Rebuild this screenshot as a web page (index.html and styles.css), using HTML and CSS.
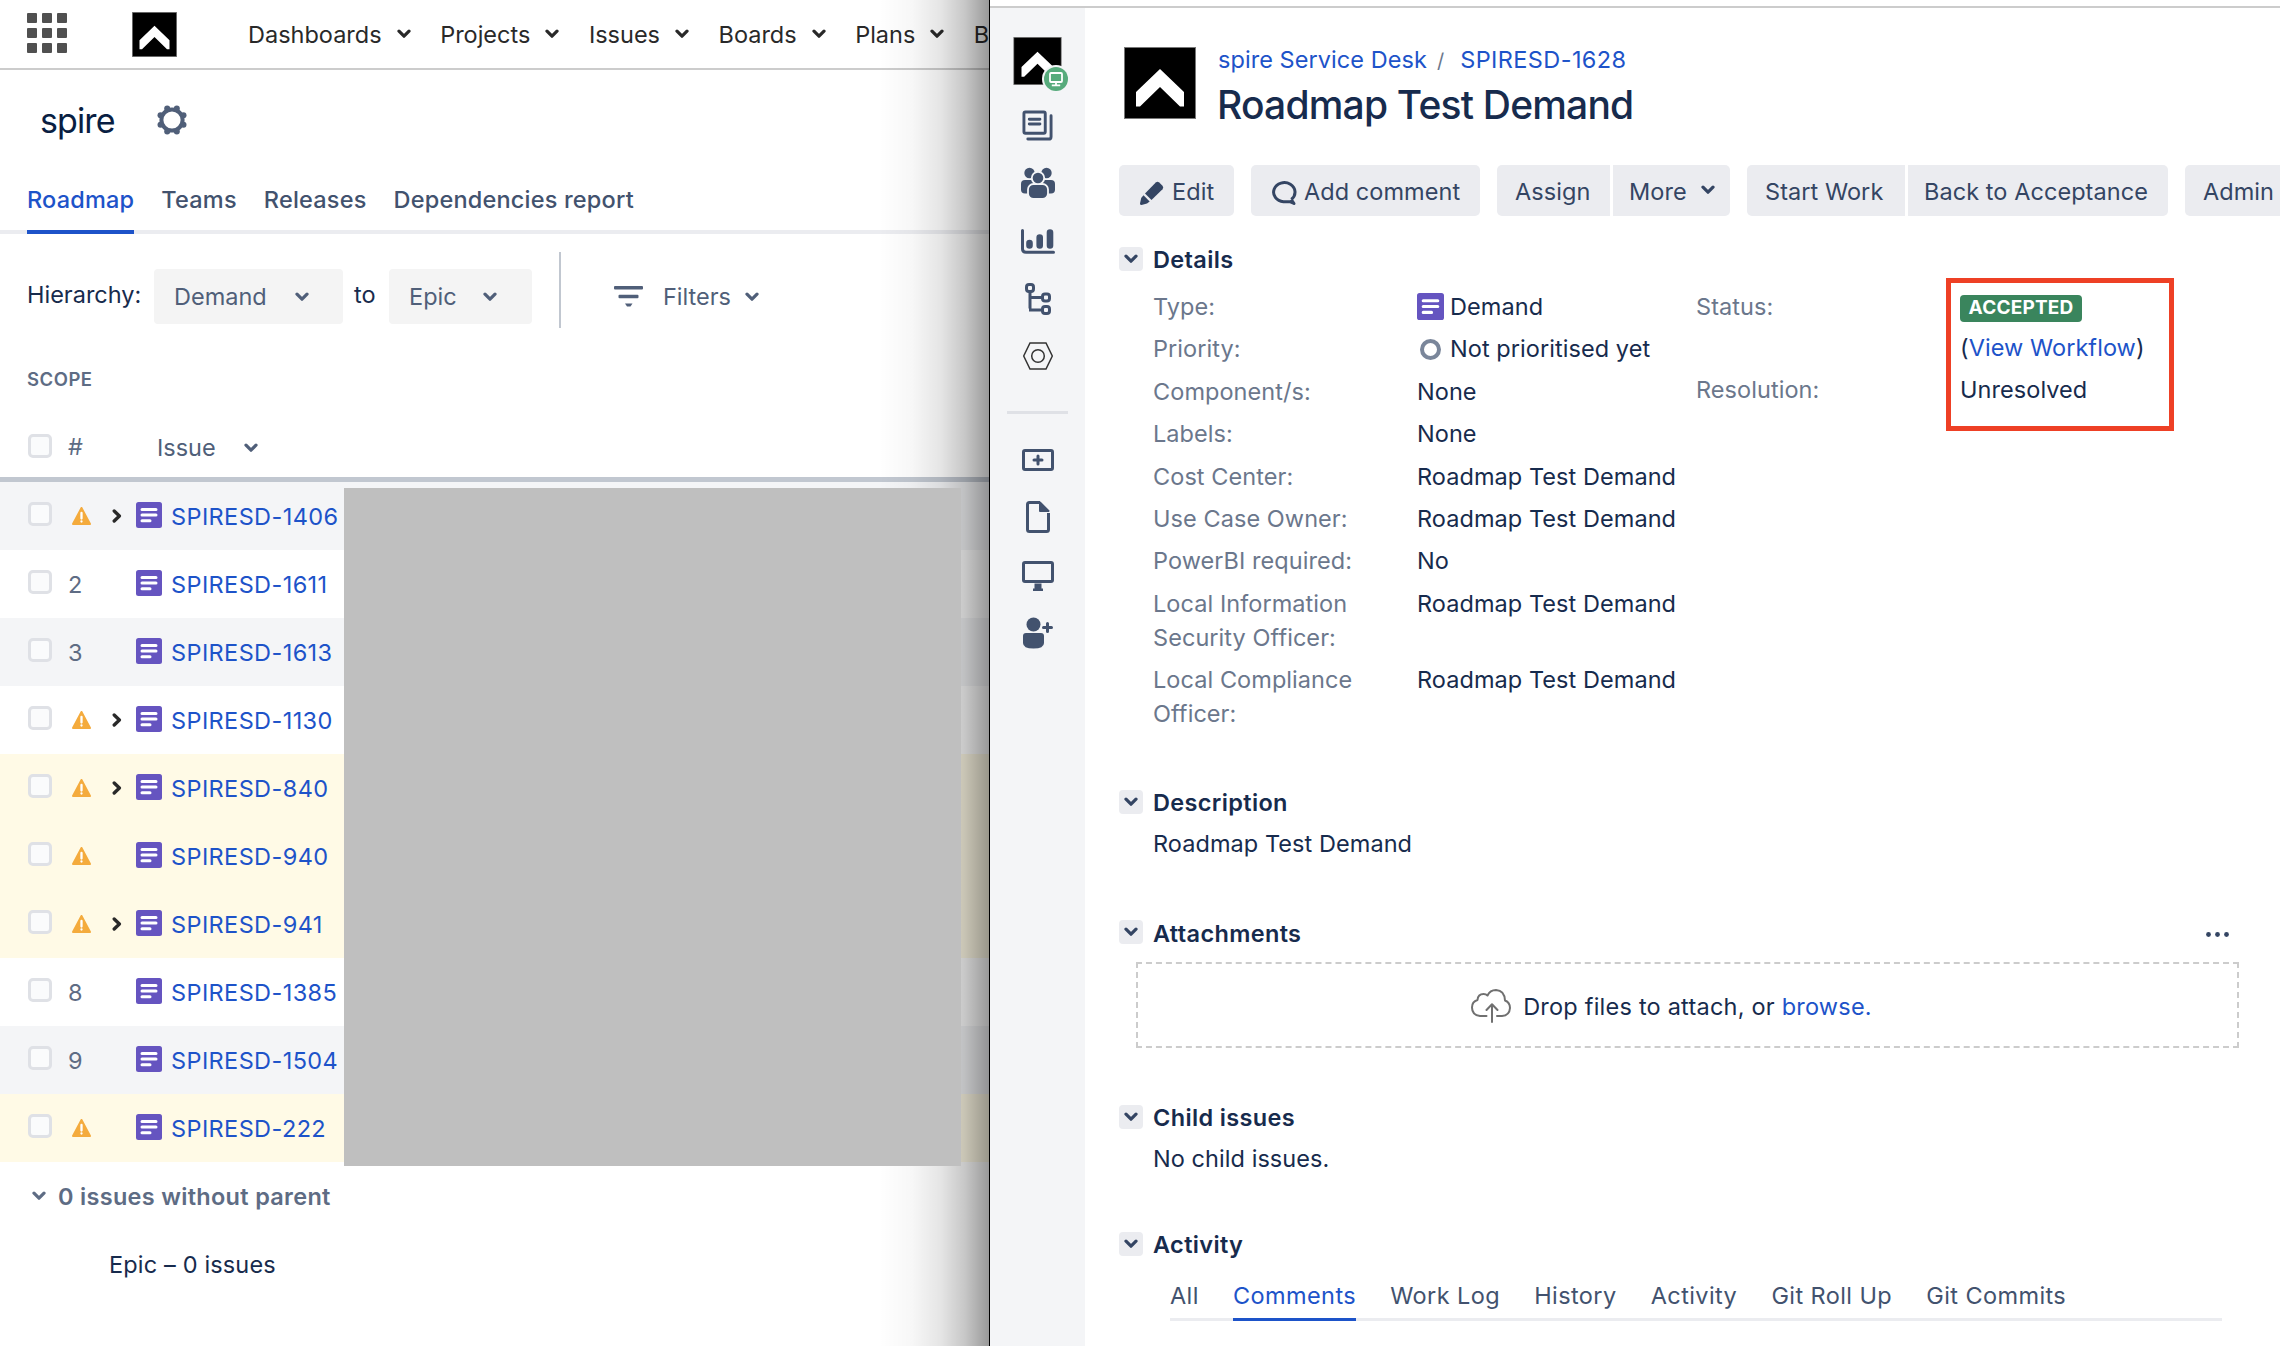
FILE: index.html
```html
<!DOCTYPE html>
<html lang="en">
<head>
  <meta charset="UTF-8" />
  <meta name="viewport" content="width=device-width, initial-scale=1.0"/>
  <title>spire - Roadmap</title>
  <link rel="stylesheet" href="styles.css">
</head>
<body>

  <!-- shared icons -->
  <svg class="sprite" aria-hidden="true">
    <symbol id="logo" viewBox="0 0 72 72">
      <rect x=".5" y=".5" width="71" height="71" fill="#000" stroke="#777"/>
      <path d="M36 22 60 45V59.500H56L36 40 16 59.500H12V45Z" fill="#fff"/>
    </symbol>
    <symbol id="chevron" viewBox="0 0 14 10">
      <path d="M2 2.200 7 7.200 12 2.200" fill="none" stroke="currentColor" stroke-width="3.200" stroke-linecap="round" stroke-linejoin="round"/>
    </symbol>
    <symbol id="chevron-right" viewBox="0 0 10 14">
      <path d="M2.200 2 7.400 7 2.200 12" fill="none" stroke="currentColor" stroke-width="3.300" stroke-linecap="round" stroke-linejoin="round"/>
    </symbol>
    <symbol id="demand" viewBox="0 0 26 26">
      <rect width="26" height="26" rx="2.500" fill="#6554c0"/>
      <path d="M6 7.500H20M6 13H20M6 18.700H14" stroke="#fff" stroke-width="3" stroke-linecap="round"/>
    </symbol>
    <symbol id="warning" viewBox="0 0 19 18">
      <path d="M9.500 1 18 17H1Z" fill="#f4ab3d" stroke="#f4ab3d" stroke-width="2" stroke-linejoin="round"/>
      <path d="M9.500 6V11.500M9.500 14.400V14.600" stroke="#fff" stroke-width="2.300" stroke-linecap="round"/>
    </symbol>
  </svg>

  <div class="layout">

    <div class="plan">
      <header class="topbar">
        <svg class="apps" viewBox="0 0 40 40" fill="#505050">
          <rect width="10" height="10" rx="1"/><rect x="15" width="10" height="10" rx="1"/><rect x="30" width="10" height="10" rx="1"/>
          <rect y="15" width="10" height="10" rx="1"/><rect x="15" y="15" width="10" height="10" rx="1"/><rect x="30" y="15" width="10" height="10" rx="1"/>
          <rect y="30" width="10" height="10" rx="1"/><rect x="15" y="30" width="10" height="10" rx="1"/><rect x="30" y="30" width="10" height="10" rx="1"/>
        </svg>
        <svg class="topbar-logo"><use href="#logo"/></svg>
        <nav class="topnav">
          <a>Dashboards <svg class="chev"><use href="#chevron"/></svg></a>
          <a>Projects <svg class="chev"><use href="#chevron"/></svg></a>
          <a>Issues <svg class="chev"><use href="#chevron"/></svg></a>
          <a>Boards <svg class="chev"><use href="#chevron"/></svg></a>
          <a>Plans <svg class="chev"><use href="#chevron"/></svg></a>
          <a>B</a>
        </nav>
      </header>

      <div class="plan-title">
        <h1>spire</h1>
        <svg class="gear" viewBox="0 0 30 30" fill="#505f79">
          <circle cx="15" cy="15" r="10.600" fill="none" stroke="#505f79" stroke-width="4"/>
          <circle cx="26.500" cy="19.800" r="3"/><circle cx="19.800" cy="26.500" r="3"/>
          <circle cx="10.200" cy="26.500" r="3"/><circle cx="3.500" cy="19.800" r="3"/>
          <circle cx="3.500" cy="10.200" r="3"/><circle cx="10.200" cy="3.500" r="3"/>
          <circle cx="19.800" cy="3.500" r="3"/><circle cx="26.500" cy="10.200" r="3"/>
        </svg>
      </div>

      <nav class="plan-tabs">
        <a class="active">Roadmap</a>
        <a>Teams</a>
        <a>Releases</a>
        <a>Dependencies report</a>
      </nav>

      <div class="toolbar">
        <span class="label">Hierarchy:</span>
        <button class="select from">Demand <svg class="chev"><use href="#chevron"/></svg></button>
        <span class="label">to</span>
        <button class="select to">Epic <svg class="chev"><use href="#chevron"/></svg></button>
        <div class="filters">
          <svg class="filter-icon" viewBox="0 0 29 21" fill="#505f79">
            <rect width="29" height="3.600" rx="1"/><rect x="4.500" y="8.700" width="20" height="3.600" rx="1"/><path d="M11 17.500H18.500L16.500 20.500H13Z"/>
          </svg>
          <span>Filters</span>
          <svg class="chev"><use href="#chevron"/></svg>
        </div>
      </div>

      <div class="scope">SCOPE</div>

      <div class="thead">
        <i class="checkbox"></i>
        <span class="num">#</span>
        <span class="th-issue">Issue <svg class="chev"><use href="#chevron"/></svg></span>
      </div>

      <div class="rows">
        <div class="row grey"><i class="checkbox"></i><span class="num"><svg class="warn"><use href="#warning"/></svg></span><span class="exp"><svg><use href="#chevron-right"/></svg></span><svg class="type"><use href="#demand"/></svg><a>SPIRESD-1406</a></div>
        <div class="row"><i class="checkbox"></i><span class="num">2</span><span class="exp"></span><svg class="type"><use href="#demand"/></svg><a>SPIRESD-1611</a></div>
        <div class="row grey"><i class="checkbox"></i><span class="num">3</span><span class="exp"></span><svg class="type"><use href="#demand"/></svg><a>SPIRESD-1613</a></div>
        <div class="row"><i class="checkbox"></i><span class="num"><svg class="warn"><use href="#warning"/></svg></span><span class="exp"><svg><use href="#chevron-right"/></svg></span><svg class="type"><use href="#demand"/></svg><a>SPIRESD-1130</a></div>
        <div class="row yellow"><i class="checkbox"></i><span class="num"><svg class="warn"><use href="#warning"/></svg></span><span class="exp"><svg><use href="#chevron-right"/></svg></span><svg class="type"><use href="#demand"/></svg><a>SPIRESD-840</a></div>
        <div class="row yellow"><i class="checkbox"></i><span class="num"><svg class="warn"><use href="#warning"/></svg></span><span class="exp"></span><svg class="type"><use href="#demand"/></svg><a>SPIRESD-940</a></div>
        <div class="row yellow"><i class="checkbox"></i><span class="num"><svg class="warn"><use href="#warning"/></svg></span><span class="exp"><svg><use href="#chevron-right"/></svg></span><svg class="type"><use href="#demand"/></svg><a>SPIRESD-941</a></div>
        <div class="row"><i class="checkbox"></i><span class="num">8</span><span class="exp"></span><svg class="type"><use href="#demand"/></svg><a>SPIRESD-1385</a></div>
        <div class="row grey"><i class="checkbox"></i><span class="num">9</span><span class="exp"></span><svg class="type"><use href="#demand"/></svg><a>SPIRESD-1504</a></div>
        <div class="row yellow"><i class="checkbox"></i><span class="num"><svg class="warn"><use href="#warning"/></svg></span><span class="exp"></span><svg class="type"><use href="#demand"/></svg><a>SPIRESD-222</a></div>
        <div class="redacted"></div>
      </div>

      <div class="no-parent"><svg class="chev"><use href="#chevron"/></svg><span>0 issues without parent</span></div>
      <div class="epic-line">Epic – 0 issues</div>

      <div class="edge-shadow"></div>
    </div>

    <div class="issue">
      <aside class="sidebar">
        <div class="project">
          <svg class="project-logo"><use href="#logo"/></svg>
          <svg class="project-badge" viewBox="0 0 28 28">
            <circle cx="14" cy="14" r="14" fill="#f4f5f7"/>
            <circle cx="14" cy="14" r="12" fill="#57ab7c"/>
            <rect x="8" y="8" width="12" height="9" rx="1" fill="none" stroke="#fff" stroke-width="1.800"/>
            <path d="M14 17V20M9.800 20.300H18.200" stroke="#fff" stroke-width="1.800"/>
          </svg>
        </div>
        <svg class="s-queues" viewBox="0 0 32 32" fill="none" stroke="#42526e" stroke-width="3" stroke-linecap="round" stroke-linejoin="round">
          <rect x="2" y="2" width="22" height="22" rx="1.500"/><path d="M7.500 9.500H18.500M7.500 14.500H18.500M30 6V27.500Q30 30 27.500 30H6"/>
        </svg>
        <svg class="s-people" viewBox="0 0 34 32" fill="#42526e">
          <circle cx="8.500" cy="6" r="5.200"/><circle cx="25.500" cy="6" r="5.200"/>
          <rect y="13" width="14" height="13.500" rx="4"/><rect x="20" y="13" width="14" height="13.500" rx="4"/>
          <g stroke="#f4f5f7" stroke-width="1.800"><rect x="7" y="17" width="20" height="15" rx="5.500"/><circle cx="17" cy="11" r="6.200"/></g>
        </svg>
        <svg class="s-chart" viewBox="0 0 34 25" fill="none" stroke="#42526e" stroke-linecap="round">
          <path d="M1.500 1.500V20Q1.500 23.300 5 23.300H32.500" stroke-width="3"/>
          <path d="M8.500 14V16.500M18.700 8.500V16.500M29 3.500V16.500" stroke-width="6.600"/>
        </svg>
        <svg class="s-tree" viewBox="0 0 26 32" fill="none" stroke="#42526e" stroke-width="3">
          <rect x="1.500" y="1.500" width="7" height="7" rx="2.500"/><rect x="17.500" y="11" width="7" height="7" rx="2.500"/><rect x="17.500" y="23.500" width="7" height="7" rx="2.500"/>
          <path d="M5 9V25.500M4 27H17M5 14.500H17"/>
        </svg>
        <svg class="s-hex" viewBox="0 0 30 28" fill="none" stroke="#333" stroke-width="1.500">
          <path d="M7 1H23L29.300 14 23 27H7L.7 14Z"/><circle cx="15" cy="14" r="6.300"/>
        </svg>
        <hr>
        <svg class="s-add" viewBox="0 0 32 22" fill="none" stroke="#42526e" stroke-width="3" stroke-linecap="round">
          <rect x="1.500" y="1.500" width="29" height="19" rx="1.500"/><path d="M16 7V15M12 11H20"/>
        </svg>
        <svg class="s-file" viewBox="0 0 24 32" fill="none" stroke="#42526e" stroke-width="3" stroke-linejoin="round">
          <path d="M22.500 12V28.500Q22.500 30.500 20.500 30.500H3.500Q1.500 30.500 1.500 28.500V3.500Q1.500 1.500 3.500 1.500H14"/><path d="M14 1.500 22.500 10H14Z" fill="#42526e" stroke-width="2"/>
        </svg>
        <svg class="s-screen" viewBox="0 0 32 31" fill="none" stroke="#42526e" stroke-width="3">
          <rect x="1.500" y="1.500" width="29" height="19" rx="1.500"/><path d="M12.500 22.500H19.500V27.500H21V30H11V27.500H12.500Z" fill="#42526e" stroke="none"/>
        </svg>
        <svg class="s-invite" viewBox="0 0 30 32" fill="#42526e">
          <circle cx="10.500" cy="7.500" r="7"/><path d="M0 19Q0 16 3 16H18Q21 16 21 19V26Q21 31.500 10.500 31.500 0 31.500 0 26Z"/>
          <path d="M24.500 6.500V14.500M20.500 10.500H28.500" stroke="#42526e" stroke-width="3" stroke-linecap="round"/>
        </svg>
      </aside>

      <main class="content">
        <div class="issue-head">
          <svg class="avatar"><use href="#logo"/></svg>
          <div>
            <div class="crumbs"><a>spire Service Desk</a><span>/</span><a class="key">SPIRESD-1628</a></div>
            <h2>Roadmap Test Demand</h2>
          </div>
        </div>

        <div class="actions">
          <div class="group">
            <button class="b-edit"><svg viewBox="0 0 24 24" fill="#344563"><path d="M5 12.500 15.800 1.500Q17.500 0 19.200 1.500L22.500 4.800Q24 6.500 22.500 8.200L11.500 19Z"/><path d="M3.500 14.200 9.700 20.400 7 22.500 1.500 24Q0 24 0 22.500L1.200 17Z"/></svg>Edit</button>
          </div>
          <div class="group">
            <button class="b-comment"><svg viewBox="0 0 26 24" fill="none" stroke="#344563" stroke-width="3"><path d="M20.300 18.500A10.700 9.600 0 1 0 12.500 20.800H19.500L23 22.500 20.300 18.500" stroke-linejoin="round"/></svg>Add comment</button>
          </div>
          <div class="group">
            <button class="b-assign">Assign</button>
            <button class="b-more">More <svg class="chev"><use href="#chevron"/></svg></button>
          </div>
          <div class="group">
            <button class="b-start">Start Work</button>
            <button class="b-back">Back to Acceptance</button>
          </div>
          <div class="group">
            <button class="b-admin">Admin</button>
          </div>
        </div>

        <section class="details">
          <h3><i class="toggle"><svg class="chev"><use href="#chevron"/></svg></i>Details</h3>
          <div class="detail-cols">
            <dl class="fields">
              <dt>Type:</dt><dd><svg class="d-type"><use href="#demand"/></svg>Demand</dd>
              <dt>Priority:</dt><dd><i class="prio"></i>Not prioritised yet</dd>
              <dt>Component/s:</dt><dd>None</dd>
              <dt>Labels:</dt><dd>None</dd>
              <dt>Cost Center:</dt><dd>Roadmap Test Demand</dd>
              <dt>Use Case Owner:</dt><dd>Roadmap Test Demand</dd>
              <dt>PowerBI required:</dt><dd>No</dd>
              <dt>Local Information Security Officer:</dt><dd>Roadmap Test Demand</dd>
              <dt>Local Compliance Officer:</dt><dd>Roadmap Test Demand</dd>
            </dl>
            <dl class="fields status">
              <dt>Status:</dt><dd><b class="lozenge">ACCEPTED</b><div class="wf">(<a>View Workflow</a>)</div></dd>
              <dt>Resolution:</dt><dd>Unresolved</dd>
            </dl>
            <div class="highlight"></div>
          </div>
        </section>

        <section class="description">
          <h3><i class="toggle"><svg class="chev"><use href="#chevron"/></svg></i>Description</h3>
          <p>Roadmap Test Demand</p>
        </section>

        <section class="attachments">
          <h3><i class="toggle"><svg class="chev"><use href="#chevron"/></svg></i>Attachments
            <svg class="dots" viewBox="0 0 23 5" fill="#344563"><circle cx="2.500" cy="2.500" r="2.400"/><circle cx="11.500" cy="2.500" r="2.400"/><circle cx="20.500" cy="2.500" r="2.400"/></svg>
          </h3>
          <div class="dropzone">
            <svg class="cloud" viewBox="0 0 40 34" fill="none" stroke="#707070" stroke-width="2" stroke-linecap="round" stroke-linejoin="round">
              <path d="M15.500 27H9Q1 26 1 18.500 1 12.500 6.500 11 7 5 12.500 5 15 5 16.500 6.500 19 1 25 1 33.500 1.500 34 11.500 39 13.500 39 19 38.500 26.500 31 27H26"/>
              <path d="M21 33V15.500M15.500 21 21 15.200 26.500 21"/>
            </svg>
            <span>Drop files to attach, or <a>browse.</a></span>
          </div>
        </section>

        <section class="children">
          <h3><i class="toggle"><svg class="chev"><use href="#chevron"/></svg></i>Child issues</h3>
          <p>No child issues.</p>
        </section>

        <section class="activity">
          <h3><i class="toggle"><svg class="chev"><use href="#chevron"/></svg></i>Activity</h3>
          <nav class="activity-tabs">
            <a>All</a>
            <a class="active">Comments</a>
            <a>Work Log</a>
            <a>History</a>
            <a>Activity</a>
            <a>Git Roll Up</a>
            <a>Git Commits</a>
          </nav>
        </section>
      </main>
    </div>

  </div>

</body>
</html>
```
FILE: styles.css
```css
* { box-sizing: border-box; margin: 0; padding: 0; }
body {
  font-family: Inter, "Liberation Sans", sans-serif;
  font-size: 23.5px;
  color: #172b4d;
  background: #fff;
  height: 1346px;
  overflow: hidden;
}

svg { display: block; flex: none; }
.sprite { width: 0; height: 0; position: absolute; }
.chev { width: 14px; height: 10px; }

button {
  font: inherit;
  letter-spacing: inherit;
  color: inherit;
  border: 0;
  white-space: nowrap;
}

.layout { display: flex; height: 1346px; }

/* left window */
.plan {
  position: relative;
  width: 989px;
  flex: none;
  overflow: hidden;
}

.topbar {
  display: flex;
  align-items: center;
  height: 70px;
  padding-left: 27px;
  border-bottom: 2px solid #ccc;
  color: #292929;
}
.apps { width: 40px; height: 40px; margin-top: -2px; }
.topbar-logo { width: 45px; height: 45px; margin-left: 65px; }
.topnav { display: flex; gap: 29.5px; margin-left: 71px; white-space: nowrap; }
.topnav a { display: flex; align-items: center; gap: 15px; }

.plan-title {
  display: flex;
  align-items: center;
  height: 101px;
  padding-left: 40px;
}
.plan-title h1 { font-size: 34px; font-weight: 400; width: 117px; letter-spacing: -.9px; color: #091e42; }
.gear { width: 30px; height: 30px; margin-bottom: 1px; }

.plan-tabs {
  display: flex;
  gap: 27px;
  height: 63px;
  padding-left: 27px;
  box-shadow: inset 0 -4px #ebecf0;
  font-weight: 500;
  line-height: 58px;
  letter-spacing: .2px;
  color: #42526e;
}
.plan-tabs .active { color: #1d53c9; border-bottom: 4px solid #1d53c9; }

.toolbar {
  display: flex;
  align-items: center;
  height: 76px;
  margin-top: 18px;
  padding-left: 27px;
}
.toolbar .label { margin-top: 9px; width: 127px; }
.toolbar .select + .label { width: 35px; margin-left: 11px; }
.select {
  display: flex;
  align-items: center;
  height: 55px;
  margin-top: 13px;
  padding-left: 20px;
  border-radius: 4px;
  background: #f4f4f4;
  color: #505f79;
}
.select.from { width: 189px; gap: 28px; }
.select.to { width: 143px; gap: 26px; }
.filters {
  display: flex;
  align-items: center;
  height: 76px;
  margin-left: 27px;
  padding: 13px 0 0 53px;
  border-left: 2px solid #c1c7d0;
  color: #505f79;
}
.filters span { margin: 0 14px 0 20px; }
.filter-icon { width: 29px; height: 21px; }

.scope {
  height: 102px;
  padding-left: 27px;
  font-size: 18.5px;
  font-weight: 600;
  line-height: 102px;
  letter-spacing: .5px;
  color: #5e6c84;
}

.checkbox {
  width: 24px;
  height: 24px;
  flex: none;
  border: 3px solid #dfe1e6;
  border-radius: 5px;
  background: #fafbfc;
}
.thead {
  display: flex;
  align-items: center;
  height: 52px;
  padding: 0 0 15px 28px;
  border-bottom: 5px solid #c1c7d0;
  color: #505f79;
}
.num { width: 43px; margin-left: 16px; color: #5e6c84; }
.th-issue { display: flex; align-items: center; gap: 28px; margin: 3px 0 0 46px; }

.rows { position: relative; }
.row { display: flex; align-items: center; height: 68px; padding-left: 28px; }
.row .checkbox { margin-bottom: 4px; }
.row a { color: #1d53c9; letter-spacing: .4px; }
.row.grey { background: #f4f5f7; }
.row.yellow { background: #fffae6; }
.warn { width: 19px; height: 18px; margin-left: 4px; }
.exp { width: 25px; color: #292929; }
.exp svg { width: 10px; height: 14px; margin-left: 1px; }
.type { width: 26px; height: 26px; margin: 0 9px 2px 0; }

.redacted {
  position: absolute;
  z-index: 3;
  left: 344px;
  top: 6px;
  width: 617px;
  height: 678px;
  background: #bfbfbf;
}

.no-parent {
  display: flex;
  align-items: center;
  gap: 12px;
  height: 68px;
  padding-left: 32px;
  font-weight: 600;
  letter-spacing: .3px;
  color: #5e6c84;
}
.epic-line { padding-left: 109px; line-height: 70px; letter-spacing: .15px; }

/* falls from the window in front */
.edge-shadow {
  position: absolute;
  z-index: 2;
  top: 0;
  right: 0;
  width: 110px;
  height: 1346px;
  background: linear-gradient(to right, rgba(0,0,0,0), rgba(0,0,0,.03) 30%, rgba(0,0,0,.1) 56%, rgba(0,0,0,.22) 78%, rgba(0,0,0,.4));
}

/* right window */
.issue {
  display: flex;
  flex: 1;
  min-width: 0;
  padding-top: 6px;
  border-left: 1px solid #000;
}

.sidebar {
  display: flex;
  flex-direction: column;
  align-items: center;
  width: 95px;
  flex: none;
  padding-top: 29px;
  border-top: 2px solid #ccc;
  background: #f4f5f7;
}
.sidebar hr { width: 61px; height: 3px; border: 0; background: #dfe1e6; margin: 41px 0 35px; }
.project { position: relative; }
.project-logo { width: 49px; height: 48px; }
.project-badge { position: absolute; left: 29px; top: 28px; width: 28px; height: 28px; }
.s-queues { width: 31px; height: 31px; margin-top: 25px; }
.s-people { width: 34px; height: 32px; margin-top: 26px; }
.s-chart { width: 34px; height: 25px; margin-top: 30px; }
.s-tree { width: 26px; height: 32px; margin-top: 29px; }
.s-hex { width: 30px; height: 28px; margin-top: 27px; }
.s-add { width: 32px; height: 22px; }
.s-file { width: 24px; height: 32px; margin-top: 30px; }
.s-screen { width: 32px; height: 31px; margin-top: 28px; }
.s-invite { width: 30px; height: 32px; margin-top: 25px; }

.content {
  flex: 1;
  min-width: 0;
  padding-left: 34px;
  border-top: 2px solid #ccc;
  overflow: hidden;
  letter-spacing: .06px;
}
.content a { color: #1d53c9; }

.issue-head { display: flex; gap: 22px; height: 157px; padding: 39px 0 0 5px; }
.avatar { width: 72px; height: 72px; }
.crumbs { height: 26px; line-height: 26px; }
.crumbs .key { letter-spacing: .4px; }
.crumbs span { margin: 0 16px 0 10px; color: #6b778c; font-size: 20px; }
.issue-head h2 { font-size: 39px; font-weight: 500; line-height: 64px; letter-spacing: -.8px; margin-left: -1px; white-space: nowrap; }

.actions { display: flex; gap: 17px; }
.group { display: flex; gap: 3px; flex: none; border-radius: 5px; overflow: hidden; }
.group button {
  display: flex;
  align-items: center;
  height: 51px;
  padding-left: 18px;
  padding-top: 2px;
  background: #ebecf0;
  color: #344563;
}
.b-edit { width: 115px; }
.group .b-edit { padding-left: 21px; }
.b-edit svg { width: 24px; height: 24px; margin: 3px 8px 0 0; }
.b-comment { width: 229px; }
.group .b-comment { padding-left: 20px; }
.b-comment svg { width: 26px; height: 24px; margin: 2px 7px 0 0; }
.b-assign { width: 113px; }
.b-more { width: 117px; gap: 14px; }
.group .b-more, .group .b-back { padding-left: 16px; }
.b-more .chev { margin-top: -3px; }
.b-start { width: 158px; }
.b-back { width: 260px; }
.b-admin { width: 130px; }

h3 { display: flex; align-items: center; height: 34px; font-size: 23.5px; font-weight: 600; letter-spacing: .35px; }
.toggle {
  display: flex;
  align-items: center;
  justify-content: center;
  width: 24px;
  height: 24px;
  margin-right: 10px;
  border-radius: 4px;
  background: #ebecf0;
  color: #344563;
}
section p { padding-left: 34px; line-height: 34px; margin-top: 8px; }

.details { margin-top: 26px; }
.detail-cols { position: relative; display: flex; padding-left: 34px; margin-top: 14px; }
.fields { display: grid; grid-template-columns: 264px 279px; align-content: start; row-gap: 8.4px; line-height: 34px; }
.fields dt { color: #6b778c; padding-right: 30px; }
.fields dd { display: flex; }
.d-type { width: 27px; height: 27px; margin: 3px 6px 0 0; }
.prio { width: 21px; height: 21px; margin: 7px 9px 0 3px; border: 4px solid #7a869a; border-radius: 50%; }
.status { grid-template-columns: 264px 260px; row-gap: 8px; }
.status dd { display: block; }
.lozenge {
  display: block;
  width: 122px;
  height: 27px;
  margin-top: 5px;
  border-radius: 4px;
  background: #3a855d;
  color: #fff;
  font-size: 19px;
  font-weight: 700;
  line-height: 26px;
  letter-spacing: .2px;
  text-align: center;
}
.wf { margin-top: 8.5px; }
/* marks the workflow state */
.highlight {
  position: absolute;
  left: 827px;
  top: -12px;
  width: 228px;
  height: 153px;
  border: 5px solid #ee4025;
}

.description { margin-top: 54.3px; }
.attachments { margin-top: 55px; }
.dots { width: 23px; height: 5px; margin: 3px 0 0 auto; }
.attachments h3 { padding-right: 51px; }
.attachments .toggle { margin-bottom: 2px; }
.dropzone {
  display: flex;
  align-items: center;
  justify-content: center;
  gap: 12px;
  width: 1103px;
  height: 86px;
  margin: 12px 0 0 17px;
  padding: 2px 32px 0 0;
  border: 2px dashed #ccc;
  letter-spacing: .22px;
}
.cloud { width: 40px; height: 34px; }
.children { margin-top: 52px; }
.activity { margin-top: 51px; }
.activity-tabs {
  display: flex;
  gap: 34.2px;
  width: 1052px;
  height: 43px;
  margin: 16.5px 0 0 51px;
  line-height: 35px;
  letter-spacing: .4px;
  box-shadow: inset 0 -3px #ebecf0;
}
.activity-tabs a { color: #42526e; }
.activity-tabs .active { color: #1d53c9; border-bottom: 3px solid #1d53c9; }
```
